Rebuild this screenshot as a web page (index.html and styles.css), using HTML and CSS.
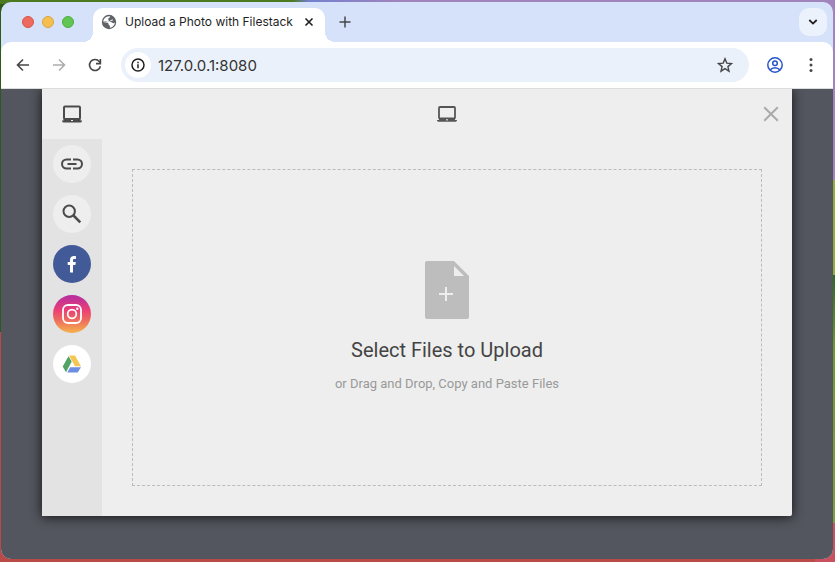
FILE: index.html
```html
<!DOCTYPE html>
<html lang="en">
<head>
    <meta charset="UTF-8">
    <meta name="viewport" content="width=device-width, initial-scale=1.0">
    <title>Upload a Photo with Filestack</title>
    <link rel="stylesheet" href="styles.css">
</head>
<body>
    <div class="window">
        <header class="tab-bar">
            <div class="lights">
                <span class="light red"></span>
                <span class="light yellow"></span>
                <span class="light green"></span>
            </div>
            <div class="tab">
                <svg class="globe" width="16" height="16" viewBox="0 0 16 16">
                    <circle cx="8" cy="8" r="7.2" fill="#5f6368"/>
                    <path d="M9.2 2.5c-.2 1.500-1.700 1.200-2 2.200-.2.900.700 1.300.500 2.200-.3 1-1.800.700-3.100.700H2.200c.3-2.800 2.500-5.300 5.800-5.400z" fill="#fff"/>
                    <path d="M2 8.500l3.600.1c1.500 0 2 .9 2 1.900 0 .8 1.300.5 1.300 1.500v1.800c2.700-.4 4.800-2.600 5-5.300-1.100.7-1.800.9-2.500.2-.8-.8-2.300-.2-2.300-1.600 0-1.200 1.500-1.200 2.300-1.900l.6 1.200" fill="#fff"/>
                </svg>
                <span class="tab-title">Upload a Photo with Filestack</span>
                <button type="button" class="icon-btn tab-close" aria-label="Close tab">
                    <svg width="10" height="10" viewBox="0 0 10 10"><path d="M1.500 1.500l7 7M8.500 1.500l-7 7" stroke="#1f1f1f" stroke-width="1.600"/></svg>
                </button>
            </div>
            <button type="button" class="icon-btn new-tab" aria-label="New tab">
                <svg width="12" height="12" viewBox="0 0 12 12"><path d="M6 .5v11M.5 6h11" stroke="#474747" stroke-width="1.500"/></svg>
            </button>
            <button type="button" class="icon-btn tab-search" aria-label="Search tabs">
                <svg width="10" height="8" viewBox="0 0 10 8"><path d="M1.300 2l3.700 3.600L8.700 2" fill="none" stroke="#1f1f1f" stroke-width="1.800"/></svg>
            </button>
        </header>

        <div class="toolbar">
            <div class="nav">
                <button type="button" class="icon-btn" aria-label="Back">
                    <svg width="14" height="14" viewBox="0 0 14 14"><path d="M13 7H2M7 1.500L1.500 7 7 12.500" fill="none" stroke="#474747" stroke-width="1.600"/></svg>
                </button>
                <button type="button" class="icon-btn" aria-label="Forward">
                    <svg width="14" height="14" viewBox="0 0 14 14"><path d="M1 7h11M7 1.500L12.500 7 7 12.500" fill="none" stroke="#adadad" stroke-width="1.600"/></svg>
                </button>
                <button type="button" class="icon-btn" aria-label="Reload">
                    <svg width="14" height="14" viewBox="0 0 14 14"><path d="M12.400 8.200A5.500 5.500 0 1 1 11.300 3.500L12.400 4.800" fill="none" stroke="#474747" stroke-width="1.600"/><path d="M12.400 1v4.600H8" fill="none" stroke="#474747" stroke-width="1.600"/></svg>
                </button>
            </div>
            <div class="address">
                <button type="button" class="icon-btn site-info" aria-label="Site information">
                    <svg width="14" height="14" viewBox="0 0 14 14"><circle cx="7" cy="7" r="6" fill="none" stroke="#1f1f1f" stroke-width="1.500"/><path d="M7 6.200v4M7 3.700v1.500" stroke="#1f1f1f" stroke-width="1.500"/></svg>
                </button>
                <input type="text" class="url" value="127.0.0.1:8080" aria-label="Address">
                <button type="button" class="icon-btn" aria-label="Bookmark this page">
                    <svg width="16" height="16" viewBox="0 0 16 16"><path d="M8 1.800l1.800 4.300 4.700.4-3.600 3.100 1.100 4.600L8 11.700l-4 2.500 1.100-4.600L1.500 6.500l4.700-.4z" fill="none" stroke="#474747" stroke-width="1.400"/></svg>
                </button>
            </div>
            <button type="button" class="icon-btn profile" aria-label="Profile">
                <svg width="16" height="16" viewBox="0 0 16 16" fill="none" stroke="#2757c9" stroke-width="1.500"><circle cx="8" cy="8" r="7.200"/><circle cx="8" cy="6.300" r="2.300"/><path d="M3 13c1.300-1.600 3-2.300 5-2.300s3.700.7 5 2.300"/></svg>
            </button>
            <button type="button" class="icon-btn" aria-label="Menu">
                <svg width="4" height="14" viewBox="0 0 4 14" fill="#474747"><circle cx="2" cy="1.600" r="1.500"/><circle cx="2" cy="7" r="1.500"/><circle cx="2" cy="12.400" r="1.500"/></svg>
            </button>
        </div>

        <main class="page">
            <div class="modal" role="dialog" aria-label="File picker">
                <nav class="sources">
                    <button type="button" class="source active" aria-label="My device">
                        <svg width="20" height="18" viewBox="0 0 20 18"><rect x="2" y="1.500" width="16" height="12.500" rx="1" fill="none" stroke="#4b4b4b" stroke-width="2"/><path d="M1.500 14h17v1.500H20c0 1.200-.6 2-1.500 2h-17C.6 17.500 0 16.700 0 15.500h1.500z" fill="#4b4b4b"/><path d="M9 15h2v1H9z" fill="#eee"/></svg>
                    </button>
                    <button type="button" class="source" aria-label="Link (URL)">
                        <span class="circle">
                            <svg width="22" height="12" viewBox="0 0 22 12" fill="none" stroke="#4b4b4b" stroke-width="2"><path d="M10 1.500H5.500a4.500 4.500 0 0 0 0 9H10M12 1.500h4.500a4.500 4.500 0 0 1 0 9H12M6.500 6h9"/></svg>
                        </span>
                    </button>
                    <button type="button" class="source" aria-label="Web search">
                        <span class="circle">
                            <svg width="20" height="20" viewBox="0 0 20 20" fill="none" stroke="#4b4b4b"><circle cx="7.200" cy="7.200" r="5.700" stroke-width="2"/><path d="M11.500 11.500l6.800 6.800" stroke-width="2.500"/></svg>
                        </span>
                    </button>
                    <button type="button" class="source" aria-label="Facebook">
                        <span class="circle facebook">
                            <svg width="10" height="18" viewBox="0 0 10 18"><path d="M3 17.500V10H.7V7H3V5.100C3 2.500 4.500 1 7 1h1.900v2.900H7.400C6.400 3.900 6 4.300 6 5.200V7h2.800l-.4 3H6v7.500z" fill="#fff"/></svg>
                        </span>
                    </button>
                    <button type="button" class="source" aria-label="Instagram">
                        <span class="circle instagram">
                            <svg width="20" height="20" viewBox="0 0 20 20" fill="none" stroke="#fff" stroke-width="1.800"><rect x="1" y="1" width="18" height="18" rx="5"/><circle cx="10" cy="10" r="4.300"/><circle cx="15.300" cy="4.700" r="1.200" fill="#fff" stroke="none"/></svg>
                        </span>
                    </button>
                    <button type="button" class="source" aria-label="Google Drive">
                        <span class="circle drive">
                            <svg width="20" height="18" viewBox="0 0 20 18"><path d="M7 .5h6l6 10.800h-6z" fill="#f3c752"/><path d="M6.500 1.200L9.700 6.500 4 17.300.7 11.500z" fill="#4ea365"/><path d="M8.200 12.200h10.800l-3.300 5.300H5.200z" fill="#6c8fe2"/></svg>
                        </span>
                    </button>
                </nav>
                <section class="content">
                    <div class="content-header">
                        <svg width="20" height="16" viewBox="0 0 20 16"><rect x="2" y="1" width="16" height="11.500" rx="1" fill="none" stroke="#555" stroke-width="1.800"/><path d="M2 12.500h16V14h2c0 1-.6 1.700-1.500 1.700h-17C.6 15.700 0 15 0 14h2z" fill="#555"/><path d="M9 13h2v1.500H9z" fill="#bbb"/></svg>
                        <button type="button" class="icon-btn modal-close" aria-label="Close">
                            <svg width="16" height="16" viewBox="0 0 16 16"><path d="M1.200 1.200l13.600 13.600M14.800 1.200L1.200 14.800" stroke="#aaa" stroke-width="2"/></svg>
                        </button>
                    </div>
                    <button type="button" class="drop-area">
                        <svg width="44" height="58" viewBox="0 0 44 58"><path d="M2 0h27l15 15v41a2 2 0 0 1-2 2H2a2 2 0 0 1-2-2V2a2 2 0 0 1 2-2z" fill="#bdbdbd"/><path d="M29 5v10h10z" fill="#eee"/><path d="M21 26v14M14 33h14" stroke="#eee" stroke-width="2"/></svg>
                        <span class="drop-title">Select Files to Upload</span>
                        <span class="drop-text">or Drag and Drop, Copy and Paste Files</span>
                    </button>
                </section>
            </div>
        </main>
    </div>
</body>
</html>
```

FILE: styles.css
```css
* {
    box-sizing: border-box;
}

body {
    margin: 0;
    height: 100vh;
    padding: 2px 2px 3px 1px;
    display: flex;
    font-family: Roboto, sans-serif;
    background:
        linear-gradient(to right, #4c7a20 35%, #7480cf 37%, #a184bb 48%) top / 100% 4px no-repeat,
        linear-gradient(#a184bb 32%, #93ac3a 32%, #93ac3a 49%, #2f6a20 49%, #6f9a2a 62%, #7f9f3a 93%, #c9505f 93%) right / 20px 100% no-repeat,
        linear-gradient(#2c5a18 59%, #b94a48 59%);
}

button {
    padding: 0;
    border: none;
    background: none;
    font-family: inherit;
    cursor: pointer;
}

svg {
    display: block;
}

.icon-btn {
    display: flex;
    align-items: center;
    justify-content: center;
    flex-shrink: 0;
}

.window {
    flex: 1;
    display: flex;
    flex-direction: column;
    border-radius: 10px;
    overflow: hidden;
    background: #d6e2fa;
}

/* Tab strip */
.tab-bar {
    height: 40px;
    display: flex;
    align-items: center;
    padding: 0 6px 0 21px;
}

.lights {
    display: flex;
    gap: 8px;
    margin-right: 19px;
}

.light {
    width: 12px;
    height: 12px;
    border-radius: 50%;
}

.red {
    background: #ed6a5e;
    border: 1px solid #d65549;
}

.yellow {
    background: #f5bf4f;
    border: 1px solid #dba43c;
}

.green {
    background: #61c554;
    border: 1px solid #50ad42;
}

.tab {
    position: relative;
    align-self: flex-end;
    height: 34px;
    display: flex;
    align-items: center;
    padding: 0 11px 6px 8px;
    border-radius: 10px 10px 0 0;
    background: #fff;
}

/* Curved feet of the active tab */
.tab::before,
.tab::after {
    content: "";
    position: absolute;
    bottom: 0;
    width: 10px;
    height: 10px;
}

.tab::before {
    right: 100%;
    background: radial-gradient(circle at 0 0, #d6e2fa 10px, #fff 10px);
}

.tab::after {
    left: 100%;
    background: radial-gradient(circle at 100% 0, #d6e2fa 10px, #fff 10px);
}

.tab-title {
    margin: 0 11px 0 8px;
    font-family: Inter, sans-serif;
    font-size: 12px;
    line-height: 16px;
    color: #1f1f1f;
    white-space: nowrap;
}

.new-tab {
    margin-left: 14px;
}

.tab-search {
    width: 28px;
    height: 28px;
    margin-left: auto;
    border-radius: 10px;
    background: #ecf2fc;
}

/* Toolbar */
.toolbar {
    height: 47px;
    display: flex;
    align-items: center;
    padding: 0 20px 0 15px;
    border-bottom: 1px solid #dcdcdc;
    border-radius: 10px 10px 0 0;
    background: #fff;
}

.nav {
    display: flex;
    gap: 22px;
}

.address {
    flex: 1;
    height: 34px;
    display: flex;
    align-items: center;
    padding: 0 16px 0 4px;
    margin: 0 18px 0 19px;
    border-radius: 17px;
    background: #ebf1fa;
}

.site-info {
    width: 26px;
    height: 26px;
    border-radius: 50%;
    background: #fff;
}

.url {
    flex: 1;
    min-width: 0;
    padding: 0 7px;
    border: none;
    outline: none;
    background: transparent;
    font-family: Inter, sans-serif;
    font-size: 15px;
    color: #333;
}

.profile {
    margin-right: 26px;
}

/* Page behind the picker */
.page {
    flex: 1;
    display: flex;
    padding: 0 41px 43px;
    background: #53565e;
    overflow: hidden;
}

.modal {
    flex: 1;
    display: flex;
    border-radius: 0 0 2px 2px;
    background: #eee;
    box-shadow: 0 1px 12px rgba(0, 0, 0, 0.8);
}

.sources {
    width: 60px;
    display: flex;
    flex-direction: column;
    background: #e2e3e2;
}

.source {
    height: 50px;
    display: flex;
    align-items: center;
    justify-content: center;
}

.source.active {
    background: #eee;
}

.circle {
    width: 38px;
    height: 38px;
    display: flex;
    align-items: center;
    justify-content: center;
    border-radius: 50%;
    background: #eee;
}

.facebook {
    background: #425a98;
}

.instagram {
    background: linear-gradient(#b9309c 5%, #ec3f75 40%, #ed6a5e 65%, #f4a94f 95%);
}

.drive {
    background: #fff;
}

.content {
    flex: 1;
    display: flex;
    flex-direction: column;
}

.content-header {
    height: 50px;
    display: grid;
    grid-template-columns: 1fr auto 1fr;
    align-items: center;
    padding: 0 13px;
}

.content-header svg {
    grid-column: 2;
}

.modal-close {
    grid-column: 3;
    justify-self: end;
}

.drop-area {
    flex: 1;
    display: flex;
    flex-direction: column;
    align-items: center;
    justify-content: center;
    margin: 30px;
    padding-bottom: 2px;
    border: 1px dashed #bbb;
}

.drop-title {
    margin-top: 18px;
    font-size: 20px;
    line-height: 26px;
    color: #444;
}

.drop-text {
    margin-top: 13px;
    font-size: 13px;
    line-height: 16px;
    color: #999;
}
```
